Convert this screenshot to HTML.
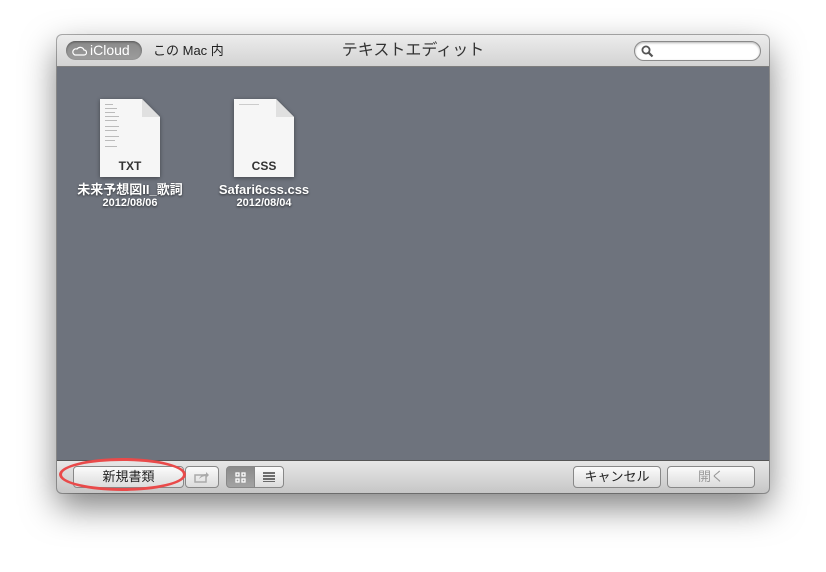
<!DOCTYPE html>
<html><head><meta charset="utf-8"><style>
*{margin:0;padding:0;box-sizing:border-box}
body{width:826px;height:572px;background:#fff;font-family:"Liberation Sans","Noto Sans CJK JP",sans-serif;position:relative;overflow:hidden}
.win{position:absolute;left:57px;top:35px;width:712px;height:458px;border-radius:5px;box-shadow:0 14px 34px rgba(0,0,0,.5),0 0 0 1px rgba(0,0,0,.3);overflow:hidden;background:#6e737d}
.title{position:absolute;left:0;top:0;width:712px;height:32px;background:linear-gradient(#ececec,#d3d3d3);border-bottom:1px solid #7d7d7d}
.icl{position:absolute;left:9px;top:6px;width:76px;height:19px;border-radius:10px;background:linear-gradient(#8a8a8a,#9c9c9c);box-shadow:inset 0 1px 2px rgba(0,0,0,.4);color:#fff;font-size:14px;line-height:19px;padding-left:24px}
.mac{position:absolute;left:96px;top:6px;font-size:13px;line-height:19px;color:#222}
.tt{position:absolute;left:0;width:712px;top:5px;text-align:center;font-size:16px;line-height:22px;color:#333}
.search{position:absolute;left:577px;top:6px;width:127px;height:20px;border-radius:10px;background:#fff;border:1px solid #8a8a8a;box-shadow:inset 0 1px 2px rgba(0,0,0,.3)}
.content{position:absolute;left:0;top:33px;width:712px;height:392px;background:#6e737d}
.file{position:absolute;width:120px;text-align:center;color:#fff}
.file svg{filter:drop-shadow(0 1px 2px rgba(0,0,0,.4))}
.file .n,.file .d{text-shadow:0 1px 2px rgba(0,0,0,.6)}
.file .n{font-size:13px;font-weight:bold;line-height:14px}
.file .d{font-size:11px;line-height:13px;font-weight:bold}
.bot{position:absolute;left:0;top:425px;width:712px;height:33px;background:linear-gradient(#e7e7e7,#c6c6c6);border-top:1px solid #555}
.btn{position:absolute;height:22px;border:1px solid #888;border-radius:4px;background:linear-gradient(#fbfbfb,#dcdcdc);font-size:13px;line-height:20px;text-align:center;color:#222}
</style></head><body>
<div class="win">
 <div class="title">
  <div class="icl"><svg style="position:absolute;left:6px;top:5px" width="15" height="10" viewBox="0 0 15 10"><path d="M3 9 H12 A2.5 2.5 0 0 0 12 4 A4 4 0 0 0 5 3 A3 3 0 0 0 3 9Z" fill="none" stroke="#fff" stroke-width="1.2"/></svg>iCloud</div>
  <div class="mac">この Mac 内</div>
  <div class="tt">テキストエディット</div>
  <div class="search"><svg style="position:absolute;left:6px;top:3px" width="13" height="13" viewBox="0 0 13 13"><circle cx="5" cy="5" r="3.6" fill="none" stroke="#555" stroke-width="1.8"/><path d="M7.7 7.7 L11.5 11.5" stroke="#555" stroke-width="2.2"/></svg></div>
 </div>
 <div class="content">
  <div class="file" style="left:13px;top:30px">
   <svg width="62" height="80" viewBox="0 0 62 80"><path d="M1 1 H43 L61 19 V79 H1Z" fill="#f6f6f6"/><path d="M43 1 V19 H61" fill="#e0e0e0"/><g fill="#bbb"><rect x="6" y="6" width="8" height="1"/><rect x="6" y="10" width="12" height="1"/><rect x="6" y="14" width="10" height="1"/><rect x="6" y="18" width="14" height="1"/><rect x="6" y="22" width="12" height="1"/><rect x="6" y="28" width="14" height="1"/><rect x="6" y="32" width="12" height="1"/><rect x="6" y="38" width="14" height="1"/><rect x="6" y="42" width="10" height="1"/><rect x="6" y="48" width="12" height="1"/></g><text x="31" y="72" text-anchor="middle" font-size="12" font-weight="bold" fill="#333" font-family="Liberation Sans">TXT</text></svg>
   <div class="n">未来予想図II_歌詞</div><div class="d">2012/08/06</div>
  </div>
  <div class="file" style="left:147px;top:30px">
   <svg width="62" height="80" viewBox="0 0 62 80"><path d="M1 1 H43 L61 19 V79 H1Z" fill="#f6f6f6"/><path d="M43 1 V19 H61" fill="#e0e0e0"/><rect x="6" y="6" width="20" height="1" fill="#ccc"/><text x="31" y="72" text-anchor="middle" font-size="12" font-weight="bold" fill="#333" font-family="Liberation Sans">CSS</text></svg>
   <div class="n">Safari6css.css</div><div class="d">2012/08/04</div>
  </div>
 </div>
 <div class="bot">
  <div class="btn" style="left:16px;top:5px;width:111px">新規書類</div>
  <div class="btn" style="left:128px;top:5px;width:34px;color:#aaa"><svg width="16" height="12" viewBox="0 0 16 12" style="margin-top:4px"><rect x="1" y="4" width="11" height="7" fill="none" stroke="#aaa" stroke-width="1.5"/><path d="M5 8 Q7 3 12 3 V1 L15 4 L12 7 V5 Q8 5 5 8Z" fill="#aaa"/></svg></div>
  <div class="btn" style="left:169px;top:5px;width:29px;background:linear-gradient(#8a8a8a,#a3a3a3);border-radius:4px 0 0 4px"><svg width="11" height="11" viewBox="0 0 11 11" style="margin-top:5px"><g fill="none" stroke="#fff" stroke-width="1.3"><rect x="1" y="1" width="3" height="3"/><rect x="7" y="1" width="3" height="3"/><rect x="1" y="7" width="3" height="3"/><rect x="7" y="7" width="3" height="3"/></g></svg></div>
  <div class="btn" style="left:197px;top:5px;width:30px;border-radius:0 4px 4px 0"><svg width="12" height="10" viewBox="0 0 12 10" style="margin-top:5px"><g stroke="#222" stroke-width="1.2"><path d="M0 1H12M0 4H12M0 7H12M0 10H12"/></g></svg></div>
  <div class="btn" style="left:516px;top:5px;width:88px">キャンセル</div>
  <div class="btn" style="left:610px;top:5px;width:88px;color:#999">開く</div>
 </div>
</div>
<div style="position:absolute;left:59px;top:458px;width:127px;height:33px;border:3px solid #e94a4a;border-radius:50%"></div>
</body></html>
